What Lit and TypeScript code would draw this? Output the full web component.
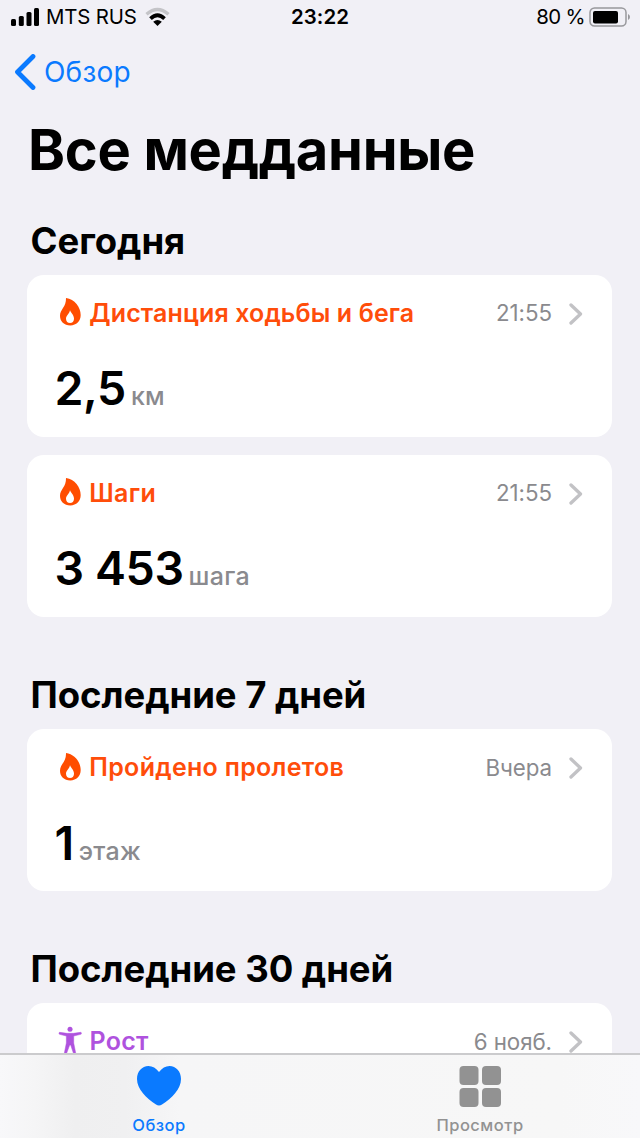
import { LitElement, html, css, svg } from "lit";
import { customElement, property } from "lit/decorators.js";

type Kind = "flame" | "body";
interface Entry { kind: Kind; name: string; time: string; value?: string; unit?: string; }
interface Group { title: string; entries: Entry[]; }

const GROUPS: Group[] = [
  {
    title: "Сегодня",
    entries: [
      { kind: "flame", name: "Дистанция ходьбы и бега", time: "21:55", value: "2,5", unit: "км" },
      { kind: "flame", name: "Шаги", time: "21:55", value: "3 453", unit: "шага" },
    ],
  },
  {
    title: "Последние 7 дней",
    entries: [{ kind: "flame", name: "Пройдено пролетов", time: "Вчера", value: "1", unit: "этаж" }],
  },
  {
    title: "Последние 30 дней",
    entries: [{ kind: "body", name: "Рост", time: "6 нояб." }],
  },
];

const flame = svg`<path fill-rule="evenodd" fill="currentColor" d="M18 0C44 4 62 27 62 51C62 70 49 82 31 82C12 82 0 70 0 53C0 34 19 27 18 0ZM30 36C31 43 42 50 42 62C42 70 37 75 30 75C23 75 18 70 18 62C18 52 29 47 30 36Z"/>`;
const body = svg`<circle cx="33" cy="7" r="7.5" fill="currentColor"/><path fill="currentColor" stroke="currentColor" stroke-width="1.5" d="M2 16L24 19H43L65 16Q67 16 67 19Q67 22 65 22L44 27V48L50 78Q50 81 47 81Q44 81 43 78L35 54H32L23 78Q22 81 19 81Q16 81 16 78L22 48V27L2 22Q0 22 0 19Q0 16 2 16Z"/>`;

@customElement("health-card")
class HealthCard extends LitElement {
  @property({ attribute: false }) entry!: Entry;
  static styles = css`
    :host { display: block; height: 162.4px; box-sizing: border-box; padding: 22.5px 29px 0 28px; background: #fff; border-radius: 17px; }
    .top { display: flex; align-items: center; height: 30px; }
    .icon { width: 20.7px; height: 27.4px; margin-left: 4.6px; flex: none; display: block; overflow: visible; }
    .body { width: 22.4px; margin-left: 4px; }
    .name { margin-left: 9px; font-size: 25px; line-height: 24px; padding-top: 1px; font-weight: 600; letter-spacing: 0.12px; color: #ff4d0a; white-space: nowrap; }
    .short { letter-spacing: 0.3px; }
    .flame { color: #ff4d00; }
    .violet { color: #af52de; }
    .body + .name { margin-left: 8px; padding-top: 0; }
    .time { margin-left: auto; font-size: 22.3px; line-height: 22px; color: #8a8a8e; padding-top: 2px; white-space: nowrap; letter-spacing: -0.05px; }
    .chev { width: 14px; height: 22px; margin: 3px 0 0 17px; flex: none; }
    .val { display: flex; align-items: baseline; margin-top: 33px; height: 56px; }
    .num { font-size: 46.5px; line-height: 56px; font-weight: 600; letter-spacing: -0.4px; margin-left: -0.5px; white-space: pre; }
    .unit { font-size: 25px; font-weight: 500; color: #8a8a8e; margin-left: 5px; letter-spacing: 0.3px; }
  `;
  render() {
    const e = this.entry;
    const isBody = e.kind === "body";
    return html`
      <div class="top">
        <svg class="icon ${isBody ? "body violet" : "flame"}" viewBox=${isBody ? "0 0 67 82" : "0 0 62 82"}>${isBody ? body : flame}</svg>
        <span class="name ${isBody ? "violet" : ""} ${e.name.length < 20 ? "short" : ""}">${e.name}</span>
        <span class="time">${e.time}</span>
        <svg class="chev" viewBox="0 0 14 22"><path d="M2 2L11.5 11L2 20" fill="none" stroke="#c2c2c5" stroke-width="3.3" stroke-linecap="round" stroke-linejoin="round"/></svg>
      </div>
      ${e.value ? html`<div class="val"><span class="num">${e.value}</span><span class="unit">${e.unit}</span></div>` : ""}
    `;
  }
}

@customElement("app-root")
class AppRoot extends LitElement {
  static styles = css`
    :host { display: flex; flex-direction: column; height: 1138px; width: 640px; overflow: hidden; background: #f1f0f6; color: #000; font-family: Inter, "Noto Sans", sans-serif; }
    .status { display: grid; grid-template-columns: 1fr auto 1fr; align-items: center; height: 34px; flex: none; padding: 0 9px 0 11px; font-size: 20.4px; line-height: 24px; }
    .left, .right { display: flex; align-items: center; }
    .right { justify-content: flex-end; letter-spacing: -0.6px; }
    .bars { width: 29px; height: 18px; margin-right: 6px; }
    .wifi { width: 26px; height: 20px; margin-left: 8px; }
    .carrier { letter-spacing: -0.15px; }
    .clock { font-weight: 600; letter-spacing: 0.1px; margin-right: 2px; }
    .batt { width: 42px; height: 20px; margin-left: 4px; }
    .nav { display: flex; align-items: center; height: 75px; flex: none; padding-left: 14px; color: #0a7aff; font-size: 28px; letter-spacing: 0.2px; }
    .back { width: 22px; height: 36px; margin-right: 8px; }
    .scroll { flex: 1; min-height: 0; overflow: hidden; padding: 0 28px 0 27px; }
    h1 { margin: 7.5px 0 0 1px; font-size: 56px; line-height: 66px; font-weight: 700; letter-spacing: -0.3px; white-space: nowrap; }
    h2 { margin: 56px 0 12px 3.5px; font-size: 36.5px; line-height: 44px; font-weight: 700; letter-spacing: -0.05px; white-space: nowrap; }
    h1 + section h2 { margin-top: 36px; }
    health-card + health-card { margin-top: 17.8px; }
    .tabs { display: grid; grid-template-columns: 1fr 1fr; flex: none; height: 85px; box-sizing: border-box; border-top: 2px solid #cbcbcd; background: linear-gradient(90deg, #f8f8fa 0, #f5f5f6 35px, #efeff0 75px, #f0f0f1 125px, #f6f6f7 180px, #f7f7f7 560px, #f8f8fa 640px); }
    .tab { display: flex; flex-direction: column; align-items: center; padding-top: 10px; color: #929292; font-size: 16.5px; line-height: 20px; font-weight: 500; letter-spacing: 0.5px; }
    .tab svg { width: 44px; height: 42px; margin-bottom: 8px; }
    .on { color: #0a7aff; padding-right: 2px; }
  `;
  render() {
    return html`
      <div class="status">
        <div class="left">
          <svg class="bars" viewBox="0 0 29 18"><rect x="0" y="11" width="5" height="7" rx="1.5"/><rect x="7.8" y="8" width="5" height="10" rx="1.5"/><rect x="15.5" y="4" width="5" height="14" rx="1.5"/><rect x="23" y="0" width="5" height="18" rx="1.5"/></svg>
          <span class="carrier">MTS RUS</span>
          <svg class="wifi" viewBox="0 0 26 20"><path d="M1.5 7.2Q12.5 -2.2 23.5 7.2" fill="none" stroke="#c4c4c8" stroke-width="3.4"/><path d="M5.5 11.6Q12.5 5 19.5 11.6" fill="none" stroke="#000" stroke-width="3.8"/><path d="M12.5 19L8.2 14.8Q12.5 11.2 16.8 14.8Z"/></svg>
        </div>
        <span class="clock">23:22</span>
        <div class="right">
          <span>80 %</span>
          <svg class="batt" viewBox="0 0 42 20"><rect x="1" y="1" width="36" height="18" rx="4.5" fill="none" stroke="#98989c" stroke-width="1.5"/><rect x="4" y="4" width="25" height="12.5" rx="2"/><path d="M39 7Q41 8 41 10Q41 12 39 13Z" fill="#98989c"/></svg>
        </div>
      </div>
      <div class="nav">
        <svg class="back" viewBox="0 0 22 36"><path d="M19 2.5L3.5 18L19 33.5" fill="none" stroke="currentColor" stroke-width="4.8" stroke-linecap="round" stroke-linejoin="round"/></svg>
        <span>Обзор</span>
      </div>
      <div class="scroll">
        <h1>Все медданные</h1>
        ${GROUPS.map((g) => html`<section><h2>${g.title}</h2>${g.entries.map((e) => html`<health-card .entry=${e}></health-card>`)}</section>`)}
      </div>
      <div class="tabs">
        <div class="tab on">
          <svg viewBox="0 0 44 42"><path fill="currentColor" d="M22 7C19 3 15.5 1 11.5 1C5 1 0 6.5 0 14C0 24 9 33 19 39.6Q22 41.5 25 39.6C35 33 44 24 44 14C44 6.5 39 1 32.5 1C28.5 1 25 3 22 7Z"/></svg>
          <span>Обзор</span>
        </div>
        <div class="tab">
          <svg viewBox="0 0 44 42"><g fill="currentColor"><rect x="1.5" y="1" width="19" height="19" rx="4"/><rect x="24" y="1" width="19" height="19" rx="4"/><rect x="1.5" y="23" width="19" height="19" rx="4"/><rect x="24" y="23" width="19" height="19" rx="4"/></g></svg>
          <span>Просмотр</span>
        </div>
      </div>
    `;
  }
}
